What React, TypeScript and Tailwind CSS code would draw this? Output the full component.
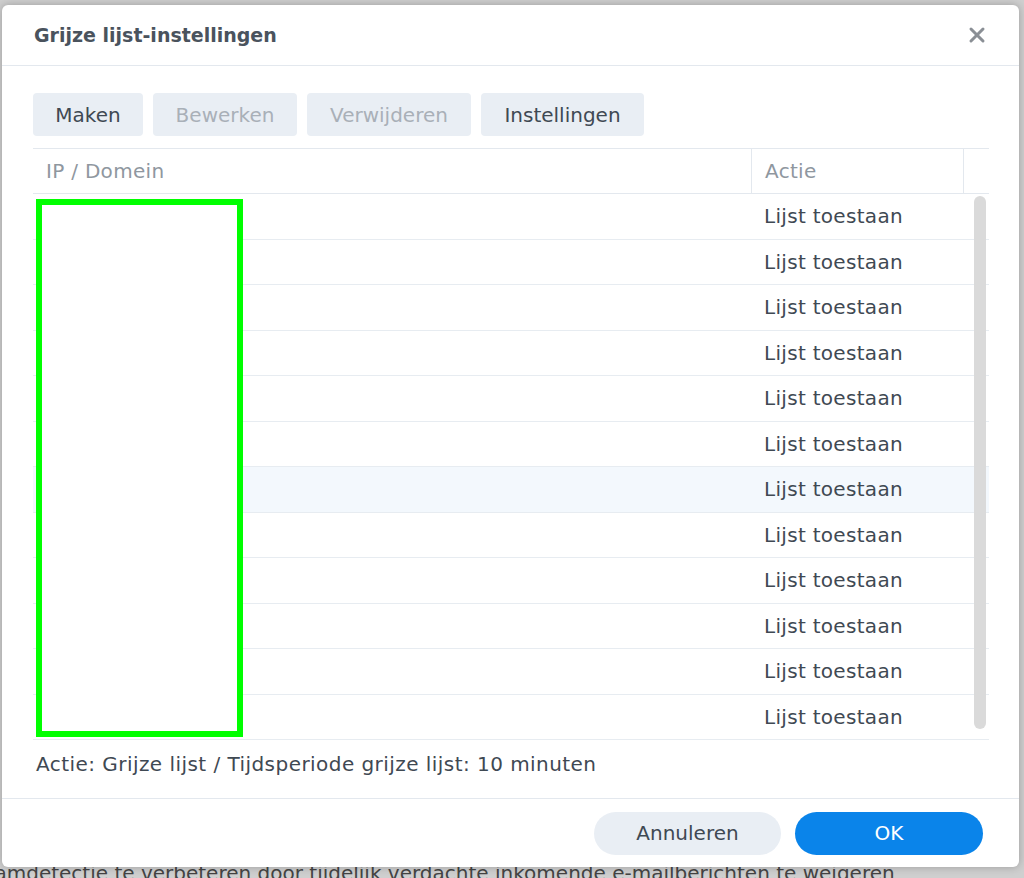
import { X } from 'lucide-react'

const ROWS = Array.from({ length: 12 }, (_, i) => ({ id: i, action: 'Lijst toestaan' }))

const TOOLBAR = [
  { label: 'Maken', disabled: false, width: 'w-[110px]' },
  { label: 'Bewerken', disabled: true, width: 'w-[144px]' },
  { label: 'Verwijderen', disabled: true, width: 'w-[164px]' },
  { label: 'Instellingen', disabled: false, width: 'w-[163px]' },
]

function Toolbar() {
  return (
    <div className="flex gap-[10px] pl-[31px] pt-[27px]">
      {TOOLBAR.map((b) => (
        <button
          key={b.label}
          className={`h-[43px] ${b.width} rounded-[4px] bg-[#e9eef4] text-[20px] ${
            b.disabled ? 'text-[#a9b0b8]' : 'text-[#3f4953]'
          }`}
        >
          {b.label}
        </button>
      ))}
    </div>
  )
}

function ListTable() {
  return (
    <div className="relative mx-[31px] mt-[12px] w-[956px] border-t border-[#e3e8ee]">
      {/* header */}
      <div className="flex h-[45px] border-b border-[#e3e8ee] text-[20px] tracking-[0.3px] text-[#8f979f]">
        <div className="flex w-[718px] items-center pl-[13px]">IP / Domein</div>
        <div className="flex w-[212px] items-center border-l border-[#e3e8ee] pl-[13px]">Actie</div>
        <div className="flex-1 border-l border-[#e3e8ee]" />
      </div>

      {/* rows */}
      <div className="relative">
        {ROWS.map((r) => (
          <div
            key={r.id}
            className={`flex h-[45.5px] items-center border-b border-[#e7ecf1] text-[20px] tracking-[0.3px] text-[#3f4953] ${
              r.id === 6 ? 'bg-[#f3f8fd]' : ''
            }`}
          >
            <div className="w-[718px]" />
            <div className="pl-[13px]">{r.action}</div>
          </div>
        ))}

        {/* scrollbar */}
        <div className="absolute right-[3px] top-[2px] h-[533px] w-[12px] rounded-full bg-[#dadada]" />
      </div>

      {/* redaction box */}
      <div className="absolute left-[3px] top-[50px] h-[538px] w-[207px] border-[6px] border-[#00ff00] bg-white" />
    </div>
  )
}

function Dialog() {
  return (
    <div className="absolute left-[2px] top-[5px] flex h-[862px] w-[1017px] flex-col rounded-[6px] bg-white shadow-[0_0_8px_rgba(0,0,0,0.25)]">
      <div className="flex h-[61px] shrink-0 items-center justify-between border-b border-[#e3e8ee] pl-[32px] pr-[30px]">
        <span className="text-[19px] font-bold text-[#4a535d]">Grijze lijst-instellingen</span>
        <X className="h-[24px] w-[24px] text-[#8a8f95]" strokeWidth={3} />
      </div>

      <Toolbar />
      <ListTable />

      <div className="pl-[34px] pt-[9px] text-[20px] tracking-[0.45px] text-[#3f4953]">
        Actie: Grijze lijst / Tijdsperiode grijze lijst: 10 minuten
      </div>

      <div className="mt-auto flex h-[69px] items-center justify-end gap-[14px] border-t border-[#e3e8ee] pr-[36px]">
        <button className="h-[43px] w-[187px] rounded-full bg-[#e9eef4] text-[20px] text-[#3f4953]">Annuleren</button>
        <button className="h-[43px] w-[188px] rounded-full bg-[#0a84ea] text-[20px] text-white">OK</button>
      </div>
    </div>
  )
}

export default function App() {
  return (
    <div
      className="relative h-[878px] w-[1024px] overflow-hidden bg-[#cfcfcf]"
      style={{ fontFamily: '"DejaVu Sans", Verdana, sans-serif' }}
    >
      <div className="absolute left-[-60px] top-[858px] whitespace-nowrap text-[20px] text-[#444]">
        de spamdetectie te verbeteren door tijdelijk verdachte inkomende e-mailberichten te weigeren
      </div>
      <Dialog />
    </div>
  )
}
